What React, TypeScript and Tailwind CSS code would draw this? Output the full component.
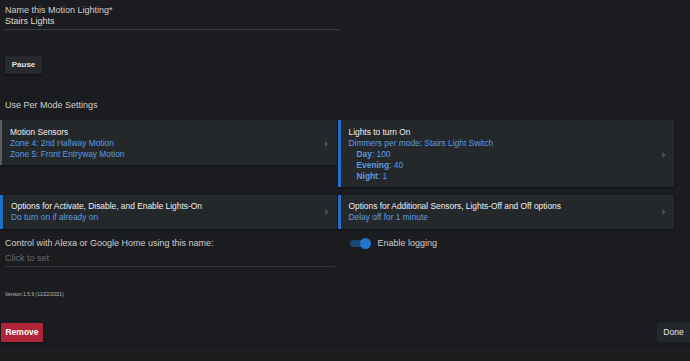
import React from 'react'

const font = { fontFamily: '"Liberation Sans", Arial, sans-serif' }

function Chevron() {
  return <span className="self-center ml-2 mr-[8px] w-0 h-0 border-y-[3px] border-y-transparent border-l-[4px] border-l-[#4a4d50]" />
}

function Card({ accent, children, className = '' }: { accent: string; children: React.ReactNode; className?: string }) {
  return (
    <div className={`flex bg-[#25282b] shadow-[0_1px_2px_rgba(0,0,0,0.5)] ${accent} ${className}`}>
      <div className="flex-1 leading-[11px] text-[8.4px]">{children}</div>
      <Chevron />
    </div>
  )
}

export default function App() {
  return (
    <div style={font} className="w-[690px] h-[361px] bg-[#1b1c1f] overflow-hidden flex flex-col text-[9px] text-[#d0d0d0]">
      {/* Name */}
      <div className="pt-[5px] pl-[5px] w-[340px]">
        <div className="leading-[11px] text-[#cfcfcf]">Name this Motion Lighting*</div>
        <div className="leading-[11px] text-[#dcdcdc] pb-[2px] border-b border-[#3a3c3f]">Stairs Lights</div>
      </div>

      <div className="pl-[5px] mt-[26px]">
        <button className="w-[37px] h-[18px] bg-[#27292c] text-[#e2e2e2] font-bold text-[8px] rounded-[1px] shadow-[0_1px_2px_rgba(0,0,0,0.5)]">Pause</button>
      </div>

      <div className="pl-[5px] mt-[26px] leading-[11px] text-[#cfcfcf]">Use Per Mode Settings</div>

      {/* Settings cards */}
      <div className="mt-[9px] w-[674px] grid grid-cols-2 gap-x-px gap-y-[8px] items-start">
        <Card accent="border-l-2 border-[#5a5c5e]" className="pt-[7px] pb-[5px] pl-[8px]">
          <div className="text-[#f0f0f0]">Motion Sensors</div>
          <div className="text-[#5b9be0]">Zone 4: 2nd Hallway Motion</div>
          <div className="text-[#5b9be0]">Zone 5: Front Entryway Motion</div>
        </Card>
        <Card accent="border-l-[3px] border-[#1f6fc4]" className="pt-[7px] pb-[5px] pl-[8px]">
          <div className="text-[#f0f0f0]">Lights to turn On</div>
          <div className="text-[#5b9be0]">Dimmers per mode: Stairs Light Switch</div>
          <div className="text-[#5b9be0] pl-[8px]"><b>Day</b>: 100</div>
          <div className="text-[#5b9be0] pl-[8px]"><b>Evening</b>: 40</div>
          <div className="text-[#5b9be0] pl-[8px]"><b>Night</b>: 1</div>
        </Card>
        <Card accent="border-l-[3px] border-[#1f6fc4]" className="pt-[6px] pb-[6px] pl-[8px]">
          <div className="text-[#f0f0f0]">Options for Activate, Disable, and Enable Lights-On</div>
          <div className="text-[#5b9be0]">Do turn on if already on</div>
        </Card>
        <Card accent="border-l-[3px] border-[#1f6fc4]" className="pt-[6px] pb-[6px] pl-[8px]">
          <div className="text-[#f0f0f0]">Options for Additional Sensors, Lights-Off and Off options</div>
          <div className="text-[#5b9be0]">Delay off for 1 minute</div>
        </Card>
      </div>

      {/* Alexa + logging */}
      <div className="w-[674px] grid grid-cols-2 gap-x-px mt-[9px]">
        <div className="pl-[5px] pr-[2px]">
          <div className="leading-[11px] text-[#cfcfcf]">Control with Alexa or Google Home using this name:</div>
          <div className="leading-[11px] mt-[4px] pb-[2px] text-[#6a6b6d] border-b border-[#333538]">Click to set</div>
        </div>
        <div className="pl-[12px] flex items-start">
          <div className="flex items-center h-[11px]">
            <div className="relative w-[21px] h-[11px] flex items-center">
              <div className="w-[19px] h-[7px] rounded-full bg-[#1c4776]" />
              <div className="absolute right-0 w-[11px] h-[11px] rounded-full bg-[#2273cc]" />
            </div>
            <span className="ml-[7px] text-[#cfcfcf] leading-[11px]">Enable logging</span>
          </div>
        </div>
      </div>

      <div className="pl-[5px] mt-[24px] text-[5px] leading-[6px] text-[#bdbdbd]">Version 1.5.9 (11/22/2021)</div>

      {/* Buttons */}
      <div className="mt-[26px] flex justify-between items-start">
        <button className="ml-[1px] w-[42px] h-[19px] bg-[#b0243a] text-white font-bold text-[8.5px] rounded-[1px] shadow-[0_1px_2px_rgba(0,0,0,0.6)]">Remove</button>
        <button className="w-[33px] h-[19px] bg-[#25282b] text-[#e6e6e6] text-[8.5px] rounded-l-[1px]">Done</button>
      </div>

      <div className="mt-[8px] flex-1 border-t border-[#232528] bg-[#1a1b1d]" />
    </div>
  )
}
